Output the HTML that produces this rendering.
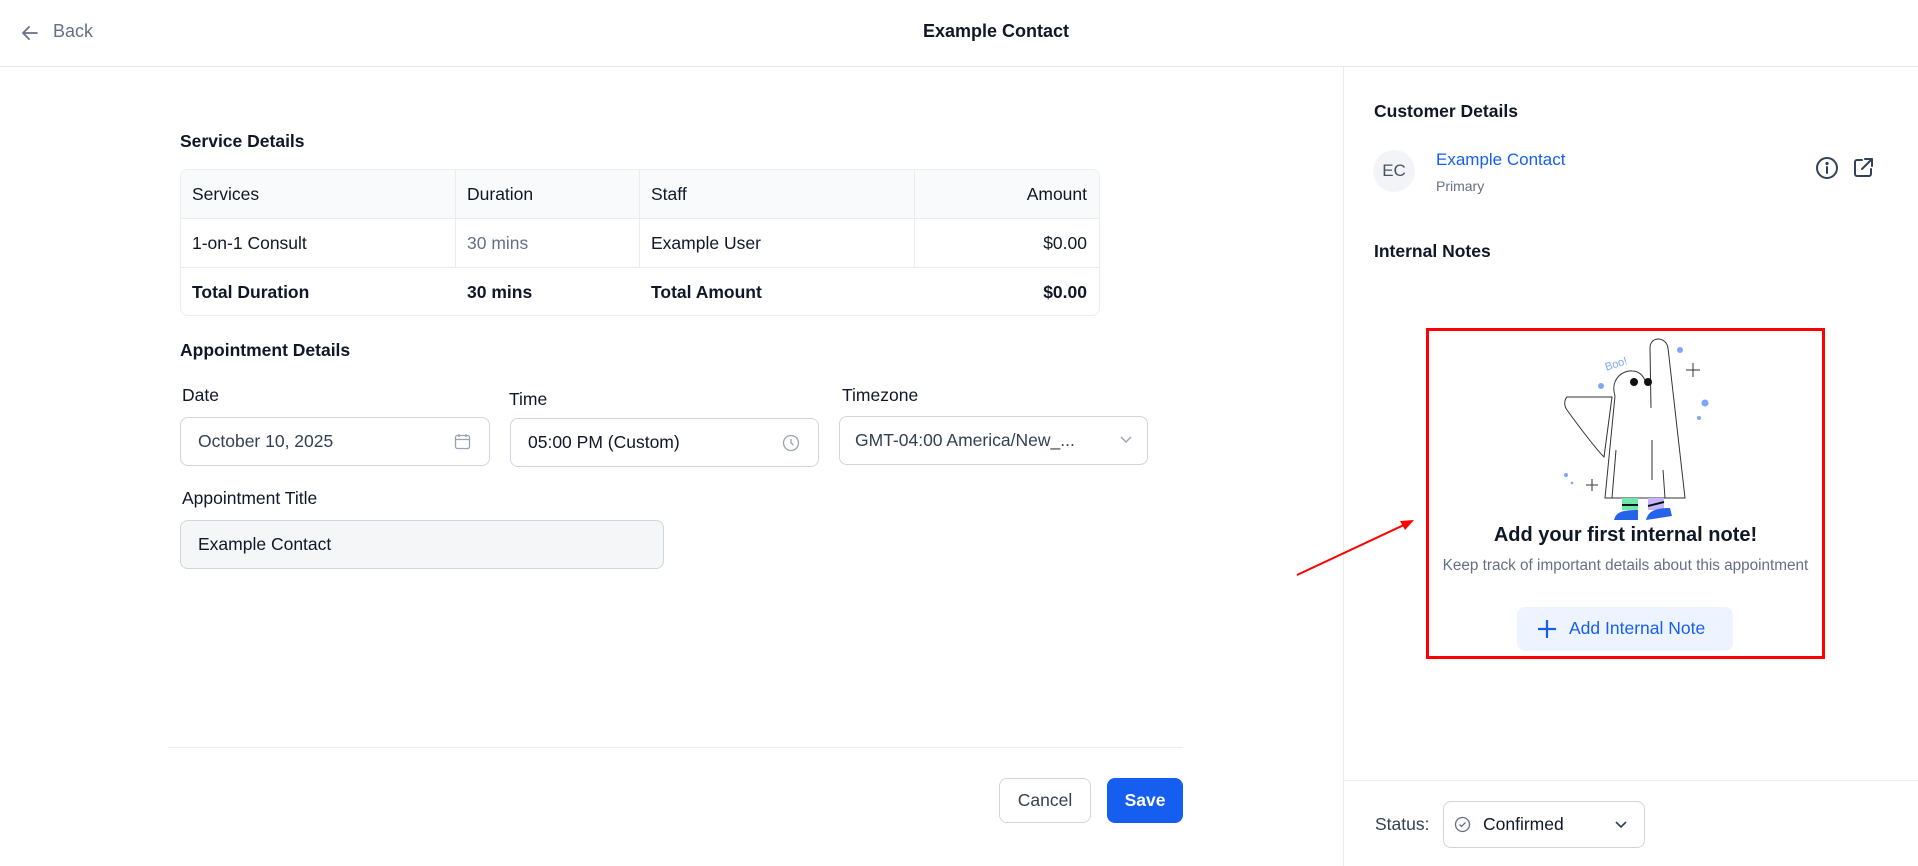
<!DOCTYPE html>
<html><head><meta charset="utf-8"><style>
*{box-sizing:border-box;margin:0;padding:0}
body{width:1918px;height:866px;background:#fff;font-family:"Liberation Sans",sans-serif;color:#101828;position:relative;overflow:hidden}
.a{position:absolute}
.hdr{left:0;top:0;width:1918px;height:67px;border-bottom:1px solid #e4e7ec}
.t{white-space:nowrap}
.tbl{left:180px;top:169px;width:920px;height:147px;border:1px solid #eaecf0;border-radius:8px;overflow:hidden}
.row{position:absolute;left:0;width:100%;height:49px;font-size:17.5px}
.row div{position:absolute;top:0;height:49px;line-height:49px}
.inp{border:1px solid #d0d5dd;border-radius:8px;height:49px;font-size:17.5px;line-height:47px;padding-left:17px}
.lbl{font-size:17.5px;color:#101828}
</style></head><body>
<div class="a hdr"></div>
<svg class="a" style="left:20px;top:23px" width="20" height="20" viewBox="0 0 20 20" fill="none" stroke="#667085" stroke-width="1.8" stroke-linecap="round" stroke-linejoin="round"><path d="M17 10H3M9 4l-6 6 6 6"/></svg>
<div class="a t" style="left:53px;top:21px;font-size:18px;color:#667085">Back</div>
<div class="a t" style="left:0;width:1992px;text-align:center;top:21px;font-size:18px;font-weight:bold">Example Contact</div>

<div class="a" style="left:1343px;top:67px;width:1px;height:799px;background:#eaecf0"></div>
<div class="a" style="left:1343px;top:780px;width:575px;height:1px;background:#eaecf0"></div>

<div class="a t" style="left:180px;top:131px;font-size:17.5px;font-weight:bold">Service Details</div>
<div class="a tbl">
 <div class="row" style="top:0;background:#f9fafb;border-bottom:1px solid #eaecf0"><div style="left:11px">Services</div><div style="left:286px">Duration</div><div style="left:470px">Staff</div><div style="right:12px">Amount</div></div>
 <div class="row" style="top:49px;border-bottom:1px solid #eaecf0"><div style="left:11px">1-on-1 Consult</div><div style="left:286px;color:#667085">30 mins</div><div style="left:470px">Example User</div><div style="right:12px">$0.00</div></div>
 <div class="row" style="top:98px;font-weight:bold"><div style="left:11px">Total Duration</div><div style="left:286px">30 mins</div><div style="left:470px">Total Amount</div><div style="right:12px">$0.00</div></div>
 <div class="a" style="left:274px;top:0;width:1px;height:98px;background:#eaecf0"></div>
 <div class="a" style="left:458px;top:0;width:1px;height:98px;background:#eaecf0"></div>
 <div class="a" style="left:733px;top:0;width:1px;height:98px;background:#eaecf0"></div>
</div>

<div class="a t" style="left:180px;top:340px;font-size:17.5px;font-weight:bold">Appointment Details</div>
<div class="a t lbl" style="left:182px;top:385px">Date</div>
<div class="a t lbl" style="left:509px;top:389px">Time</div>
<div class="a t lbl" style="left:842px;top:385px">Timezone</div>
<div class="a inp" style="left:180px;top:417px;width:310px;color:#344054">October 10, 2025
 <svg class="a" style="right:18px;top:15px" width="17" height="17" viewBox="0 0 17 17" fill="none" stroke="#98a2b3" stroke-width="1.3"><rect x="1.5" y="2.5" width="14" height="13" rx="2"/><path d="M1.5 6.5h14M5 1v3M12 1v3"/></svg></div>
<div class="a inp" style="left:510px;top:418px;width:309px;color:#101828">05:00 PM (Custom)
 <svg class="a" style="right:18px;top:15px" width="18" height="18" viewBox="0 0 18 18" fill="none" stroke="#98a2b3" stroke-width="1.3"><circle cx="9" cy="9" r="7.5"/><path d="M9 5v4l2.5 2"/></svg></div>
<div class="a inp" style="left:839px;top:416px;width:309px;color:#344054;padding-left:15px">GMT-04:00 America/New_...
 <svg class="a" style="right:14px;top:18px" width="14" height="10" viewBox="0 0 14 10" fill="none" stroke="#98a2b3" stroke-width="1.4"><path d="M2 2l5 5 5-5"/></svg></div>
<div class="a t lbl" style="left:182px;top:488px">Appointment Title</div>
<div class="a inp" style="left:180px;top:520px;width:484px;background:#f5f6f8;color:#101828">Example Contact</div>

<div class="a" style="left:168px;top:747px;width:1015px;height:1px;background:#eaecf0"></div>
<div class="a" style="left:999px;top:778px;width:92px;height:45px;border:1px solid #d0d5dd;border-radius:8px;text-align:center;line-height:43px;font-size:17.5px;color:#344054">Cancel</div>
<div class="a" style="left:1107px;top:778px;width:76px;height:45px;background:#155eef;border-radius:8px;text-align:center;line-height:45px;font-size:17.5px;color:#fff;font-weight:bold">Save</div>

<div class="a t" style="left:1374px;top:101px;font-size:17.5px;font-weight:bold">Customer Details</div>
<div class="a" style="left:1373px;top:150px;width:42px;height:42px;border-radius:50%;background:#f2f4f7;text-align:center;line-height:42px;font-size:17px;color:#475467">EC</div>
<div class="a t" style="left:1436px;top:150px;font-size:17px;color:#155eef">Example Contact</div>
<div class="a t" style="left:1436px;top:178px;font-size:14px;color:#667085">Primary</div>
<svg class="a" style="left:1815px;top:156px" width="24" height="24" viewBox="0 0 24 24" fill="none" stroke="#344054" stroke-width="2" stroke-linecap="round"><circle cx="12" cy="12" r="10"/><path d="M12 11v6"/><circle cx="12" cy="7.5" r=".6" fill="#344054"/></svg>
<svg class="a" style="left:1851px;top:156px" width="24" height="24" viewBox="0 0 24 24" fill="none" stroke="#344054" stroke-width="2" stroke-linecap="round" stroke-linejoin="round"><path d="M11 4H6a2 2 0 0 0-2 2v12a2 2 0 0 0 2 2h12a2 2 0 0 0 2-2v-5M14 3h7v7M21 3l-10 10"/></svg>
<div class="a t" style="left:1374px;top:241px;font-size:17.5px;font-weight:bold">Internal Notes</div>

<div class="a" style="left:1426px;top:328px;width:399px;height:331px;border:3px solid #f00"></div>
<svg class="a" style="left:1530px;top:330px" width="190" height="195" viewBox="0 0 190 195" fill="none">
 <path d="M85 66C80 50 92 40 102 41c8 0 12 6 14 12" stroke="#333" fill="#fff"/>
 <path d="M37 67h45l-8 60c-10-10-32-40-37-47-3-4-3-10 0-13z" stroke="#333" fill="#fff"/>
 <path d="M85 66L75 168h80L138 18c-2-12-18-12-18 0l1 60" stroke="#333" fill="#fff"/>
 <path d="M86 120l-4 48M122 110v40M133 140l2 28" stroke="#333"/>
 <circle cx="104" cy="52" r="4" fill="#111"/><circle cx="118" cy="52" r="4" fill="#111"/>
 <rect x="92" y="168" width="16" height="12" fill="#6ee7a8"/><rect x="118" y="168" width="16" height="12" fill="#c4b5fd"/>
 <path d="M92 175h16M118 176l16-4" stroke="#111" stroke-width="2"/>
 <path d="M84 190c2-8 8-10 24-10v10z" fill="#2563eb"/><path d="M116 190c2-8 8-12 24-12l2 8z" fill="#2563eb"/>
 <circle cx="150" cy="20" r="3" fill="#7ea6f8"/><circle cx="71" cy="56" r="3" fill="#7ea6f8"/><circle cx="175" cy="73" r="3.5" fill="#7ea6f8"/><circle cx="169" cy="88" r="2" fill="#7ea6f8"/><circle cx="36" cy="145" r="2" fill="#7ea6f8"/><circle cx="42" cy="153" r="1.3" fill="#7ea6f8"/>
 <path d="M156 40h14M163 33v14M56 155h12M62 149v12" stroke="#333" stroke-width="1"/>
 <text x="74" y="38" transform="rotate(-18 84 32)" font-size="11" fill="#7ea6f8" font-family="Liberation Sans">Boo!</text>
</svg>
<div class="a t" style="left:1426px;width:399px;text-align:center;top:524px;font-size:20px;font-weight:bold">Add your first internal note!</div>
<div class="a t" style="left:1426px;width:399px;text-align:center;top:557px;font-size:15.3px;color:#667085">Keep track of important details about this appointment</div>
<div class="a" style="left:1517px;top:607px;width:216px;height:44px;background:#eef4ff;border-radius:8px"></div>
<svg class="a" style="left:1536px;top:618px" width="22" height="22" viewBox="0 0 22 22" stroke="#155eef" stroke-width="2.2"><path d="M11 2v18M2 11h18"/></svg>
<div class="a t" style="left:1569px;top:618px;font-size:17.5px;color:#155eef">Add Internal Note</div>

<svg class="a" style="left:1290px;top:512px" width="130" height="70" viewBox="0 0 130 70"><path d="M7 63L116 12" stroke="#f00" stroke-width="2"/><path d="M124 8l-14 1 5 9z" fill="#f00"/></svg>

<div class="a t" style="left:1375px;top:814px;font-size:17.5px;color:#344054">Status:</div>
<div class="a" style="left:1443px;top:801px;width:202px;height:47px;border:1px solid #d0d5dd;border-radius:8px"></div>
<svg class="a" style="left:1454px;top:816px" width="17" height="17" viewBox="0 0 17 17" fill="none" stroke="#667085" stroke-width="1.3"><circle cx="8.5" cy="8.5" r="7"/><path d="M5.5 8.5l2 2 4-4"/></svg>
<div class="a t" style="left:1483px;top:814px;font-size:17.5px;color:#101828">Confirmed</div>
<svg class="a" style="left:1614px;top:820px" width="14" height="10" viewBox="0 0 14 10" fill="none" stroke="#344054" stroke-width="1.6"><path d="M2 2l5 5 5-5"/></svg>
</body></html>
